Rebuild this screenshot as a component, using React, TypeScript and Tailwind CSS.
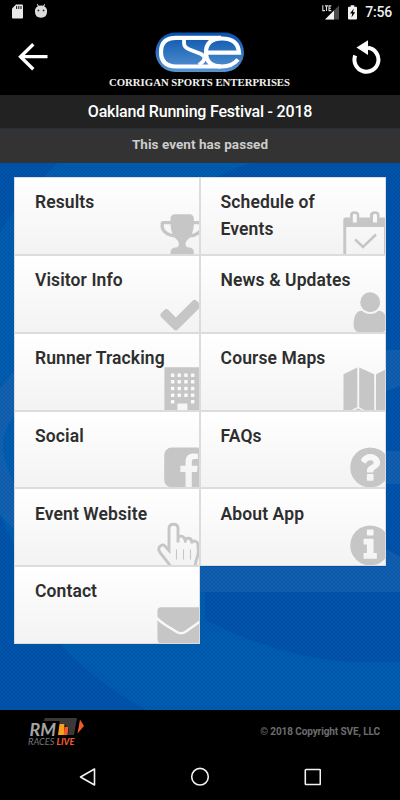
import React from 'react'

const menuItems = [
  { label: 'Results', icon: 'trophy' },
  { label: 'Schedule of Events', icon: 'calendar' },
  { label: 'Visitor Info', icon: 'check' },
  { label: 'News & Updates', icon: 'user' },
  { label: 'Runner Tracking', icon: 'building' },
  { label: 'Course Maps', icon: 'map' },
  { label: 'Social', icon: 'facebook' },
  { label: 'FAQs', icon: 'question' },
  { label: 'Event Website', icon: 'pointer' },
  { label: 'About App', icon: 'info' },
  { label: 'Contact', icon: 'envelope' },
]

// Each drawing fills the 44x44 bottom right corner of its tile
const icons: Record<string, React.ReactNode> = {
  trophy: (
    <path transform="translate(2.9 0) scale(.026)" d="M522 883q-74-162-74-371H192v96q0 78 94.500 162T522 883zm1078-275v-96h-256q0 209-74 371 141-29 235.500-113t94.500-162zm128-128v128q0 71-41.500 143t-112 130-173 97.500T1186 1020q-42 54-95 95-38 34-52.500 72.500T1024 1277q0 54 30.500 91t97.500 37q75 0 133.500 45.500T1344 1565v64q0 14-9 23t-23 9H480q-14 0-23-9t-9-23v-64q0-69 58.500-114.500T640 1405q67 0 97.500-37t30.500-91q0-51-14.500-89.500T701 1115q-53-41-95-95-113-5-215.500-44.500T217 878 105 748 64 605V480q0-40 28-68t68-28h288v-96q0-66 47-113t113-47h576q66 0 113 47t47 113v96h288q40 0 68 28t28 68z" />
  ),
  calendar: (
    <>
      <path fillRule="evenodd" d="M1.300 8.500Q1.300 6.500 3.500 6.500H8V4Q8 .3 12.500 .3T17.300 4V6.500H28V4Q28 .3 32.800 .3T37.500 4V6.500H44V44H42V16H4.200V44H1.300ZM10.800 4.500V11.500H14.800V4.500Q14.800 2.800 12.800 2.800T10.800 4.500ZM31 4.500V11.500H35V4.500Q35 2.800 33 2.800T31 4.500Z" />
      <path d="M13.200 28.500 21 36 34 23.500" fill="none" stroke="#c6c6c6" strokeWidth="2.600" />
    </>
  ),
  check: (
    <path transform="translate(1.200 2) scale(.026)" d="M1671 566q0 40-28 68l-724 724-136 136q-28 28-68 28t-68-28l-136-136-362-362q-28-28-28-68t28-68l136-136q28-28 68-28t68 28l294 295 656-657q28-28 68-28t68 28l136 136q28 28 28 68z" />
  ),
  user: (
    <path transform="translate(4.900 0) scale(.026)" d="M1536 1399q0 109-62.500 187t-150.500 78H469q-88 0-150.500-78T256 1399q0-85 8.500-160.500t31.500-152 58.500-131 94-89T583 832q131 128 313 128t313-128q76 0 134.500 34.500t94 89 58.500 131 31.500 152 8.500 160.500zm-256-887q0 159-112.500 271.500T896 896 624.500 783.500 512 512t112.500-271.500T896 128t271.500 112.500T1280 512z" />
  ),
  building: (
    <>
      <path d="M8.400.3H44V44H8.400Z" />
      {[6.400, 13.100, 19.800, 26.400, 33.100].map((y) =>
        [14.900, 21.500, 28.200, 34.900].map((x) =>
          y > 33 && (x === 21.500 || x === 28.200) ? null : (
            <rect key={`${x}-${y}`} x={x} y={y} width="3.500" height="3.500" rx=".6" fill="#f9f9f9" />
          )
        )
      )}
      <rect x="21.400" y="36.500" width="10" height="8" rx=".6" fill="#f6f6f6" />
    </>
  ),
  map: (
    <path d="M1.500 7.300 15.300.5V40L7.500 44H1.500ZM17.200.5 32.200 7.300V44H24L17.200 40ZM34 7.300 44 2.200V44H34ZM10.500 44 16.200 41.500 22 44Z" />
  ),
  facebook: (
    <path transform="translate(4.900 .1) scale(.026)" d="M1376 128q119 0 203.500 84.500T1664 416v960q0 119-84.500 203.500T1376 1664h-188v-595h199l30-232h-229V689q0-56 23.500-84t91.500-28l122-1V369q-63-9-178-9-136 0-217.500 80T948 666v171H748v232h200v595H416q-119 0-203.500-84.500T128 1376V416q0-119 84.500-203.500T416 128h960z" />
  ),
  question: (
    <path transform="translate(4.900 .1) scale(.026)" d="M1024 1376v-192q0-14-9-23t-23-9H800q-14 0-23 9t-9 23v192q0 14 9 23t23 9h192q14 0 23-9t9-23zm256-672q0-88-55.500-163t-138.500-116-170-41q-243 0-371 213-15 24 8 42l132 100q7 6 19 6 16 0 25-12 53-68 86-92 34-24 86-24 48 0 85.500 26t37.500 59q0 38-20 61t-68 45q-63 28-115.500 86.500T768 1020v36q0 14 9 23t23 9h192q14 0 23-9t9-23q0-19 21.500-49.500T1100 957q32-18 49-28.500t46-35 44.500-48 28-60.500 12.500-81zm384 192q0 209-103 385.500T1281.500 1561 896 1664t-385.500-103T231 1281.500 128 896t103-385.500T510.500 231 896 128t385.500 103T1561 510.500 1664 896z" />
  ),
  pointer: (
    <>
      <path
        d="M14.500 44 4 30.500Q1.500 26.500 4 24.200T9 24L13 28.500V6.500Q13 2.300 17.500 2.300T22 6.500V20.500M22 16Q23 13.500 26 14.300T29.500 20.500M29.500 17Q31 15.700 33.500 16.500T36 21.500M36 19.500Q37.500 18.500 40 19.500T42 25Q43 31 41 36T39.500 44"
        fill="none"
        stroke="#c6c6c6"
        strokeWidth="2.900"
      />
      <path d="M20.500 27.500V37.500M27.500 27.500V37.500M34.500 27.500V37.500" stroke="#c6c6c6" strokeWidth="1.100" />
    </>
  ),
  info: (
    <path transform="translate(4.900 .1) scale(.026)" d="M1152 1376v-160q0-14-9-23t-23-9h-96V672q0-14-9-23t-23-9H672q-14 0-23 9t-9 23v160q0 14 9 23t23 9h96v320h-96q-14 0-23 9t-9 23v160q0 14 9 23t23 9h448q14 0 23-9t9-23zm-128-896V320q0-14-9-23t-23-9H800q-14 0-23 9t-9 23v160q0 14 9 23t23 9h192q14 0 23-9t9-23zm640 416q0 209-103 385.500T1281.500 1561 896 1664t-385.500-103T231 1281.500 128 896t103-385.500T510.500 231 896 128t385.500 103T1561 510.500 1664 896z" />
  ),
  envelope: (
    <>
      <rect x="1.400" y="7.300" width="48" height="36" rx="4" />
      <path d="M0 17.500Q3.500 21 9.500 25L20 31.500Q25 35 30 31.500L44 21.500" fill="none" stroke="#f8f8f8" strokeWidth="2.500" />
    </>
  ),
}

function StatusBar() {
  return (
    <div className="flex h-6 items-center justify-between pl-3 pr-2">
      <div className="flex items-center gap-3 pb-px">
        <svg width="11" height="15" viewBox="0 0 11 15">
          <path d="M4 .5H10Q11 .5 11 1.500V13.500Q11 14.500 10 14.500H1Q0 14.500 0 13.500V4.500Z" fill="#e8e8e8" />
          <path d="M4.600 2V5M6.800 2V5M9 2V5" stroke="#222" strokeWidth="1.100" />
        </svg>
        <svg width="12" height="15" viewBox="0 0 12 15">
          <path d="M0 7H12V8Q12 13.700 6 13.700T0 8ZM0 6.300Q0 3.500 2.800 2.200L1.800.5 2.600 0 3.800 1.800Q6 1.200 8.200 1.800L9.400 0 10.200.5 9.200 2.200Q12 3.500 12 6.300Z" fill="#dcdcdc" />
          <path d="M0 6H12V8H0Z" fill="#dcdcdc" />
          <path d="M2.700 6.500h1.500M7.800 6.500h1.500" stroke="#111" strokeWidth="1.300" />
        </svg>
      </div>
      <div className="flex items-center">
        <svg width="18" height="15" viewBox="0 0 18 15" className="mr-2">
          <path d="M17 .5V14.500H3Z" fill="#4b4b4b" />
          <path d="M12 5.500V14.500H3Z" fill="#f2f2f2" />
          <path d="M-1 -1H10V7H-1Z" fill="#000" />
          <path d="M.8.300V5.600H3M3 .9H6M4.500.9V6M9.300.9H7V5.600H9.300M7 3.200H9" fill="none" stroke="#ddd" strokeWidth="1.100" />
        </svg>
        <svg width="9" height="15" viewBox="0 0 9 15" className="mr-2">
          <path d="M2.700.3H6.300V1.800H8Q9 1.800 9 2.800V13.500Q9 14.500 8 14.500H1Q0 14.500 0 13.500V2.800Q0 1.800 1 1.800H2.700Z" fill="#f2f2f2" />
          <path d="M5.800 3.500 2 8.500H4.200L3.500 12.500 7.200 7.300H5Z" fill="#000" />
        </svg>
        <span className="text-[14px] font-medium leading-none tracking-[-0.2px] text-[#eee]">7:56</span>
      </div>
    </div>
  )
}

function Header() {
  return (
    <header className="flex h-[71px] items-start justify-between pl-[18px] pr-[18px]">
      <svg width="31" height="28" viewBox="0 0 31 28" className="mt-[19px]">
        <path d="M15.300 1.200 2.500 13.700 15.300 26.300M2.500 13.700H29.500" fill="none" stroke="#fff" strokeWidth="3.300" />
      </svg>
      <div className="-ml-px flex flex-col items-center pt-2">
        <svg width="90" height="41" viewBox="0 0 90 41">
          <defs>
            <linearGradient id="logo" x2="0" y2="1">
              <stop offset="0" stopColor="#0752ac" />
              <stop offset="1" stopColor="#5795d2" />
            </linearGradient>
          </defs>
          <rect x=".5" y=".5" width="88.500" height="39.500" rx="19.700" fill="url(#logo)" />
          <g fill="none" stroke="#fff">
            <path d="M66 5.800H21Q6 5.800 6 20T21 34.500H66" strokeWidth="4.200" />
            <path d="M29 7V11Q29 15.500 34.500 17.500L46 22Q51.500 25 48 29.500L44 33" strokeWidth="3.800" />
            <path d="M50 20.700H84Q83 6.500 67 6.500T51 20.500 67 34.500Q77 34.500 83 27.500" strokeWidth="4.200" />
          </g>
        </svg>
        <svg width="184" height="16" viewBox="0 0 184 16" className="-mt-px">
          <text x="1" y="13.500" textLength="181" lengthAdjust="spacingAndGlyphs" fill="#f2f2f2" className="font-['Liberation_Serif',serif] text-[10.500px] font-bold">
            CORRIGAN SPORTS ENTERPRISES
          </text>
        </svg>
      </div>
      <svg width="30" height="35" viewBox="0 0 30 35" className="mt-4">
        <path d="M3.200 15.500A12 12 0 1 0 16 7.800" fill="none" stroke="#fff" strokeWidth="4" />
        <path d="M4.500 7.600 16 .3V15Z" fill="#fff" />
      </svg>
    </header>
  )
}

function Backdrop() {
  return (
    <svg className="absolute inset-0 h-full w-full" viewBox="0 163 400 547" preserveAspectRatio="none">
      <defs>
        <pattern id="weave" width="4" height="4" patternUnits="userSpaceOnUse">
          <path d="M0 0 4 4M4 0 0 4" stroke="#00398f" strokeWidth=".7" opacity=".25" />
        </pattern>
      </defs>
      <path d="M0 163H400V710H0Z" fill="#0054a9" />
      <path d="M58 163H250Q222 172 205 185V620Q290 662 365 662H400V710H147Q95 683 60 644L0 515V232Q22 195 58 163Z" fill="#005db0" />
      <path d="M0 388 15 370V415Q3 430 3 445T15 485V530L0 515Z" fill="#1262b0" />
      <path d="M386 350H400V386L386 391ZM386 451H400V484H386ZM386 549 400 557V592H200V567H386Z" fill="#1160b0" />
      <path d="M0 163H400V710H0Z" fill="url(#weave)" />
    </svg>
  )
}

function MenuTile({ label, icon }: { label: string; icon: string }) {
  return (
    <a href="#" className="relative block overflow-hidden border border-[#dcdcdc] bg-gradient-to-b from-white to-[#f3f3f3] pl-[19.600px] pr-6 pt-[11.200px]">
      <svg className="absolute -bottom-px -right-px" width="44" height="44" viewBox="0 0 44 44" fill="#c6c6c6">
        {icons[icon]}
      </svg>
      <span className="relative block whitespace-nowrap text-[17.500px] font-semibold leading-[26.500px] tracking-[0.100px] text-[#2e2e2e]">
        {label === 'Schedule of Events' ? <>Schedule of<br />Events</> : label}
      </span>
    </a>
  )
}

function RacesLiveLogo() {
  return (
    <svg width="58" height="30" viewBox="0 0 58 30">
      <path d="M17 1H49L46 18H40L41 10H38L37 7H31.500V4H15.500Z" fill="#3b3839" />
      <path d="M52 2.500 56 9 49.500 16.500Z" fill="#f15a29" />
      <path d="M31.500 7H36.500L36 18H30Z" fill="#f9a01b" />
      <path d="M36.500 10H40.500L39.500 18H35.800Z" fill="#f15a29" />
      <text x="1.500" y="18.500" textLength="26.500" lengthAdjust="spacingAndGlyphs" fill="#a5a5a5" className="font-[Lato,sans-serif] text-[16.500px] font-bold italic">RM</text>
      <text x="0" y="28" textLength="26.500" lengthAdjust="spacingAndGlyphs" fill="#777" className="font-[Lato,sans-serif] text-[9px] italic">RACES</text>
      <text x="28.500" y="28" textLength="18" lengthAdjust="spacingAndGlyphs" fill="#f15a29" className="font-[Lato,sans-serif] text-[9px] font-black italic">LIVE</text>
    </svg>
  )
}

export default function App() {
  return (
    <div className="flex h-[800px] w-[400px] flex-col overflow-hidden bg-black font-[Roboto,sans-serif]">
      <StatusBar />
      <Header />

      {/* Event title */}
      <h1 className="flex h-[33px] items-center justify-center bg-[#222] pt-px text-base font-medium tracking-[-0.200px] text-white">
        Oakland Running Festival - 2018
      </h1>
      <p className="flex h-[35px] items-center justify-center border-t border-[#26303a] bg-[#333] pb-1 text-[13.500px] font-bold tracking-[0.050px] text-[#ccc]">
        This event has passed
      </p>

      {/* Menu */}
      <main className="relative h-[547px] px-[14.400px] pt-[14.300px]">
        <Backdrop />
        <nav className="relative grid auto-rows-[77.800px] grid-cols-2">
          {menuItems.map((item) => (
            <MenuTile key={item.label} label={item.label} icon={item.icon} />
          ))}
        </nav>
      </main>

      {/* Footer */}
      <footer className="flex h-[45px] items-start justify-between pl-7 pr-5 pt-[7px]">
        <RacesLiveLogo />
        <span className="mt-[7px] text-[10px] font-bold tracking-[-0.100px] text-[#6d6d6d]">© 2018 Copyright SVE, LLC</span>
      </footer>

      {/* Android navigation */}
      <div className="flex h-[45px] items-start justify-between pl-[78px] pr-[79px] pt-3">
        <svg width="18" height="20" viewBox="0 0 18 20">
          <path d="M16.500 2V18L2.500 10Z" fill="none" stroke="#f2f2f2" strokeWidth="1.600" strokeLinejoin="round" />
        </svg>
        <svg width="20" height="20" viewBox="0 0 20 20">
          <circle cx="10" cy="9.700" r="8.300" fill="none" stroke="#f2f2f2" strokeWidth="1.600" />
        </svg>
        <svg width="18" height="20" viewBox="0 0 18 20">
          <rect x="2.300" y="2.500" width="15" height="15" rx=".8" fill="none" stroke="#f2f2f2" strokeWidth="1.600" />
        </svg>
      </div>
    </div>
  )
}
